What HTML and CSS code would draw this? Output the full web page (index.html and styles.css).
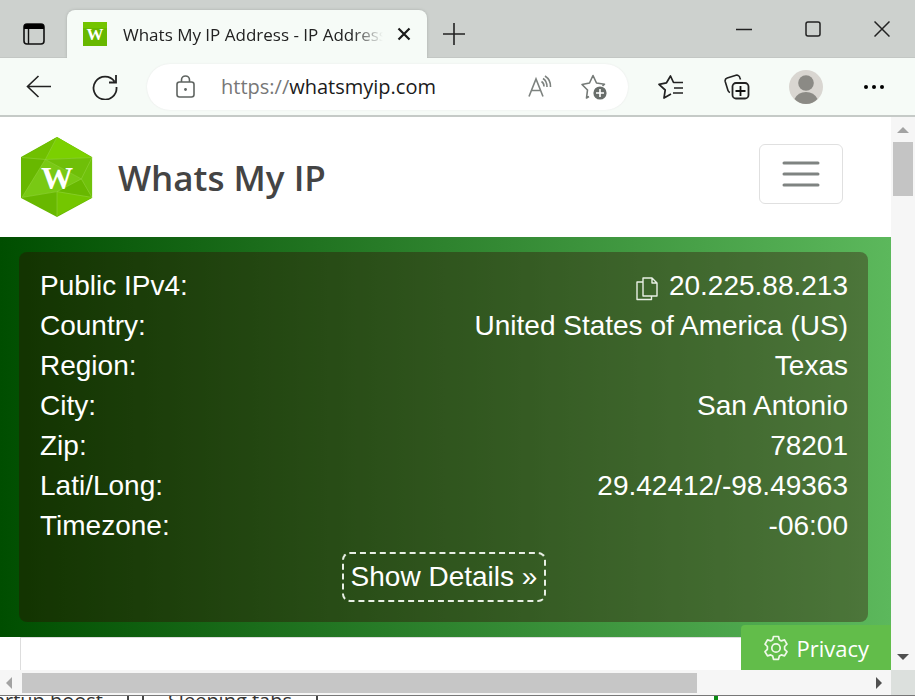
FILE: index.html
```
<!DOCTYPE html>
<html lang="en">
<head>
<meta charset="utf-8">
<meta name="viewport" content="width=device-width, initial-scale=1">
<title>Whats My IP Address</title>
<link rel="stylesheet" href="styles.css">
</head>
<body>
<div class="window">
  <div class="tabstrip">
    <button class="icon-btn tab-actions" aria-label="Tab actions">
      <svg width="22" height="22" viewBox="0 0 22 22"><rect x="1" y="1" width="20" height="20" rx="3" fill="none" stroke="#111" stroke-width="1.600"/><path d="M1 6V4a3 3 0 0 1 3-3h14a3 3 0 0 1 3 3v2z" fill="#000"/><path d="M5.500 6v15" stroke="#111" stroke-width="1.400"/></svg>
    </button>
    <div class="tab">
      <svg class="favicon" width="24" height="24" viewBox="0 0 24 24"><rect width="24" height="24" fill="#68b800"/><path d="M0 0h24v6H0z" fill="#74c400"/><text x="12" y="18" text-anchor="middle" class="favicon-letter">W</text></svg>
      <span class="tab-title">Whats My IP Address - IP Address</span>
      <button class="icon-btn tab-close" aria-label="Close tab">
        <svg width="14" height="14" viewBox="0 0 14 14"><path d="M1.500 1.500l11 11M12.500 1.500l-11 11" stroke="#1b1b1b" stroke-width="2.200"/></svg>
      </button>
    </div>
    <button class="icon-btn new-tab" aria-label="New tab">
      <svg width="22" height="22" viewBox="0 0 22 22"><path d="M11 0v22M0 11h22" stroke="#222" stroke-width="1.600"/></svg>
    </button>
    <div class="window-controls">
      <button class="icon-btn" aria-label="Minimize"><svg width="16" height="16" viewBox="0 0 16 16"><path d="M0 8.500h16" stroke="#222" stroke-width="1.500"/></svg></button>
      <button class="icon-btn" aria-label="Maximize"><svg width="16" height="16" viewBox="0 0 16 16"><rect x="1" y="1" width="14" height="14" rx="2" fill="none" stroke="#222" stroke-width="1.500"/></svg></button>
      <button class="icon-btn" aria-label="Close window"><svg width="16" height="16" viewBox="0 0 16 16"><path d="M.5.5l15 15M15.500.5l-15 15" stroke="#222" stroke-width="1.500"/></svg></button>
    </div>
  </div>

  <div class="toolbar">
    <button class="icon-btn back" aria-label="Back"><svg width="26" height="24" viewBox="0 0 26 24"><path d="M25 11.500H2M12.500 1L1.500 11.500l11 10.500" fill="none" stroke="#222" stroke-width="1.600"/></svg></button>
    <button class="icon-btn refresh" aria-label="Refresh"><svg width="26" height="26" viewBox="0 0 26 26"><path d="M24.500 13A11.500 11.500 0 1 1 22.500 7.500M24 1v7.500h-7" fill="none" stroke="#222" stroke-width="1.800"/></svg></button>
    <div class="address">
      <svg width="20" height="24" viewBox="0 0 20 24"><rect x="1" y="7" width="17" height="15" rx="2.500" fill="none" stroke="#5f6461" stroke-width="1.600"/><path d="M5.500 7V5a4 4 0 0 1 8 0v2" fill="none" stroke="#5f6461" stroke-width="1.600"/><circle cx="9.500" cy="14.500" r="1.400" fill="#5f6461"/></svg>
      <span class="url">https://<b>whatsmyip.com</b></span>
      <button class="icon-btn read" aria-label="Read aloud"><svg width="24" height="24" viewBox="0 0 24 24"><path d="M1 21.500L8 4l7 17.500M3.500 15.500h9M13.500 6.500q2.500 1.500 2.500 5M15 3.500q4 2.500 4 8.500M17 1q6 4 5.500 11" fill="none" stroke="#7d827f" stroke-width="1.600"/></svg></button>
      <button class="icon-btn" aria-label="Add to favorites"><svg width="28" height="28" viewBox="0 0 28 28"><path d="M9 23.500L6.500 25 7.500 17 2 11.500l7.500-1.500L13 2.500l3.500 7.500 8 1.200-2 1.800" fill="none" stroke="#757a77" stroke-width="1.600" stroke-linejoin="round"/><circle cx="20" cy="20" r="6.600" fill="#686d6a"/><path d="M20 16v8M16 20h8" stroke="#fff" stroke-width="1.600"/></svg></button>
    </div>
    <div class="tools">
      <button class="icon-btn" aria-label="Favorites"><svg width="26" height="26" viewBox="0 0 26 26"><path d="M13 20L6 24l1.200-8L1 10.300l7.500-1.500L12.500 2 15.500 8.500h9.500M16 14h9M15 19h10" fill="none" stroke="#222" stroke-width="1.700" stroke-linejoin="round"/></svg></button>
      <button class="icon-btn" aria-label="Collections"><svg width="26" height="26" viewBox="0 0 26 26"><path d="M6 18.500a3 3 0 0 1-2-2L1.200 7.500a3 3 0 0 1 2-3.500L12 1.300a3 3 0 0 1 3.800 2.200l.7 2" fill="none" stroke="#222" stroke-width="1.600"/><rect x="8.500" y="9" width="16" height="15.500" rx="3.500" fill="none" stroke="#222" stroke-width="1.800"/><path d="M16.500 12v10M11.500 17h10" stroke="#111" stroke-width="1.800"/></svg></button>
      <button class="icon-btn" aria-label="Profile"><svg width="34" height="34" viewBox="0 0 34 34"><circle cx="17" cy="17" r="17" fill="#d9d6d1"/><circle cx="17" cy="13" r="7.800" fill="#8b8a85"/><path d="M5.500 29Q9 22 17 22t11.500 7Q24 34 17 34T5.500 29z" fill="#8b8a85"/></svg></button>
      <button class="icon-btn" aria-label="Settings and more"><svg width="22" height="6" viewBox="0 0 22 6"><circle cx="3" cy="3" r="2" /><circle cx="11" cy="3" r="2"/><circle cx="19" cy="3" r="2"/></svg></button>
    </div>
  </div>

  <div class="viewport">
    <div class="page">
      <header class="site-header">
        <a class="brand" href="#">
          <svg width="74" height="82" viewBox="-1 -1 76 84">
            <path d="M37 1L72 21v41L37 81 1 62V21z" fill="#68b800" stroke="#68b800" stroke-width="2" stroke-linejoin="round"/>
            <path d="M37 0L25 23 1 21z" fill="#70c000"/><path d="M37 0l36 21-48 2z" fill="#7bd000"/>
            <path d="M25 23L1 62l36-6 36 6-11-19z" fill="#79c914"/><path d="M25 23l48-2-11 22z" fill="#6fbf08"/><path d="M73 21v41L62 43z" fill="#70c20b"/>
            <path d="M62 43L37 56l36 6z" fill="#68b800"/>
            <path d="M37 56v25L1 62z" fill="#68b800"/><path d="M37 56l36 6-36 19z" fill="#74c600"/>
            <path d="M1 21l24 2 48-2-11 22 11 19-36-6L1 62l24-39 37 20M37 0L25 23M37 56v25M62 43L37 56" fill="none" stroke="#92d43c" stroke-width=".6"/>
            <text x="37" y="53" text-anchor="middle" class="logo-letter">W</text>
          </svg>
          <span>Whats My IP</span>
        </a>
        <button class="menu" aria-label="Toggle navigation"><svg width="38" height="28" viewBox="0 0 38 28"><path d="M2 3h34M2 14h34M2 25h34" stroke="#7f8381" stroke-width="3" stroke-linecap="round"/></svg></button>
      </header>
      <section class="hero">
        <div class="card">
          <dl class="facts">
            <div><dt>Public IPv4:</dt><dd><svg width="22" height="30" viewBox="0 -6 22 30"><path d="M7 1h9l5 5v13H7zM16 1v5h5M7 5H1v17.500h14.500V19" fill="none" stroke="#e8efe4" stroke-width="1.400" stroke-linejoin="round"/></svg>20.225.88.213</dd></div>
            <div><dt>Country:</dt><dd>United States of America (US)</dd></div>
            <div><dt>Region:</dt><dd>Texas</dd></div>
            <div><dt>City:</dt><dd>San Antonio</dd></div>
            <div><dt>Zip:</dt><dd>78201</dd></div>
            <div><dt>Lati/Long:</dt><dd>29.42412/-98.49363</dd></div>
            <div><dt>Timezone:</dt><dd>-06:00</dd></div>
          </dl>
          <button class="details">Show Details »</button>
        </div>
      </section>
      <div class="next"></div>
      <button class="privacy"><svg width="26" height="26" viewBox="0 0 26 26"><path d="M10.500 1.500h5l.8 3.300 2 1.100 3.200-1 2.500 4.300-2.400 2.300v2.800l2.400 2.400-2.500 4.200-3.200-1-2 1.200-.8 3.200h-5l-.8-3.200-2-1.200-3.200 1L2 16.700l2.400-2.400v-2.800L2 9.200l2.500-4.300 3.200 1 2-1.100z" fill="none" stroke="#eef8e8" stroke-width="1.700" stroke-linejoin="round"/><circle cx="13" cy="13" r="4.200" fill="none" stroke="#eef8e8" stroke-width="1.700"/></svg>Privacy</button>
    </div>
    <div class="vscroll"><span class="arrow up"></span><span class="vthumb"></span><span class="arrow down"></span></div>
    <div class="hscroll"><span class="arrow left"></span><span class="hthumb"></span><span class="arrow right"></span></div>
    <div class="corner"></div>
  </div>

  <div class="behind"><span class="cell startup">Startup boost</span><span class="cell gap"></span><span class="cell sleeping">Sleeping tabs</span><span class="mark"></span></div>
</div>
</body>
</html>
```
FILE: styles.css
```
* { box-sizing: border-box; }
body { margin: 0; font-family: "Open Sans", "Noto Sans", sans-serif; overflow: hidden; }
button { font: inherit; color: inherit; cursor: pointer; }
svg { display: block; flex: none; }
.window { display: flex; flex-direction: column; height: 100vh; }
.icon-btn { display: flex; align-items: center; justify-content: center; padding: 0; border: 0; background: none; flex: none; }

.tabstrip { display: flex; align-items: center; height: 58px; flex: none; background: #cdd1ce; box-shadow: inset 0 -1px #c3c7c4; }
.tab-actions { width: 67px; padding-top: 10px; }
.tab { display: flex; align-items: center; align-self: flex-end; width: 360px; height: 48px; padding: 0 16px; background: #f6fbf7; border-radius: 8px 8px 0 0; box-shadow: 0 0 3px #a9aeaa; clip-path: inset(-4px -4px 0 -4px); }
.favicon-letter { font: bold 17px "Liberation Serif", serif; fill: #fff; }
.tab-title { flex: 1; margin: 0 14px 0 16px; font-size: 17px; color: #222; white-space: nowrap; overflow: hidden; mask-image: linear-gradient(to right, #000 88%, transparent); }
.new-tab { width: 54px; padding-top: 10px; }
.window-controls { display: flex; gap: 53px; margin-left: auto; padding-right: 25px; }

.toolbar { display: flex; align-items: center; height: 59px; flex: none; background: #f6fbf7; border-bottom: 2px solid #c5cac7; }
.back { width: 78px; }
.refresh { width: 54px; }
.address { display: flex; align-items: center; flex: 1; height: 46px; margin-left: 15px; padding: 0 20px 0 29px; background: #fff; border-radius: 23px; box-shadow: 0 0 2px #e6e6e6; }
.url { flex: 1; margin-left: 25px; font-size: 20px; color: #777; white-space: nowrap; }
.url b { font-weight: 400; color: #1b1b1b; }
.read { margin-right: 28px; }
.tools { display: flex; align-items: center; justify-content: space-between; width: 287px; padding: 0 30px; }

.viewport { display: grid; grid-template: minmax(0, 1fr) 25px / minmax(0, 1fr) 24px; flex: 1; min-height: 0; }
.page { position: relative; overflow: hidden; background: #fff; }
.site-header { display: flex; align-items: center; justify-content: space-between; height: 120px; padding: 0 48px 0 20px; }
.brand { display: flex; align-items: center; gap: 24px; font-size: 35px; font-weight: 600; color: #444; text-decoration: none; }
.logo-letter { font: bold 33px "Liberation Serif", serif; fill: #fff; }
.menu { display: flex; align-items: center; justify-content: center; width: 84px; height: 60px; margin-bottom: 6px; background: #fff; border: 1px solid #e0e0e0; border-radius: 6px; }
.hero { padding: 15px 23px 15px 19px; background: linear-gradient(to right, #004e00, #5cb85c); }
.card { padding: 14px 20px 20px 21px; border-radius: 8px; background: rgba(51, 0, 0, 0.35); color: #fff; font: 28px/40px "Liberation Sans", sans-serif; text-align: center; }
.facts { margin: 0; }
.facts div { display: flex; justify-content: space-between; }
.facts dd { display: flex; align-items: center; gap: 11px; margin: 0; }
.details { height: 50px; margin-top: 6px; padding: 0 7px; background: none; border: 2px dashed #e8efe4; border-radius: 8px; vertical-align: top; }
.next { height: 60px; margin-left: 20px; border: solid #ddd; border-width: 1px 0 0 1px; }
.privacy { position: absolute; right: 0; bottom: 0; display: flex; align-items: center; gap: 7px; height: 45px; padding: 0 22px; border: 0; border-radius: 4px 0 0 0; background: #62bd4a; color: #fff; font-size: 22px; }

.vscroll { display: flex; flex-direction: column; align-items: center; padding: 10px 0; background: #f6f6f6; }
.vthumb { width: 20px; height: 54px; margin-top: 9px; background: #c4c4c4; }
.hscroll { display: flex; align-items: center; padding: 0 9px 0 6px; background: #f6f6f6; }
.hthumb { width: 77%; height: 20px; margin-left: 10px; background: #c6c6c6; }
.corner { background: #dce0dd; }
.arrow { flex: none; border: 0 solid transparent; }
.up { border-width: 0 6px 6px; border-bottom-color: #a3a3a3; }
.down { margin-top: auto; border-width: 6px 6px 0; border-top-color: #505050; }
.left { border-width: 6px 6px 6px 0; border-right-color: #a3a3a3; }
.right { margin-left: auto; border-width: 6px 0 6px 6px; border-left-color: #505050; }

.behind { display: flex; align-items: flex-start; flex: none; height: 5px; overflow: hidden; border-top: 1px solid #777; background: #fff; font-size: 20px; line-height: 10px; color: #333; }
.cell { display: flex; justify-content: flex-end; height: 10px; border-right: 2px solid #444; white-space: nowrap; }
.startup { width: 129px; padding-right: 24px; }
.gap { width: 15px; }
.sleeping { width: 174px; padding-right: 24px; }
.mark { width: 4px; height: 6px; margin-left: 396px; background: #0a8a12; }
```
